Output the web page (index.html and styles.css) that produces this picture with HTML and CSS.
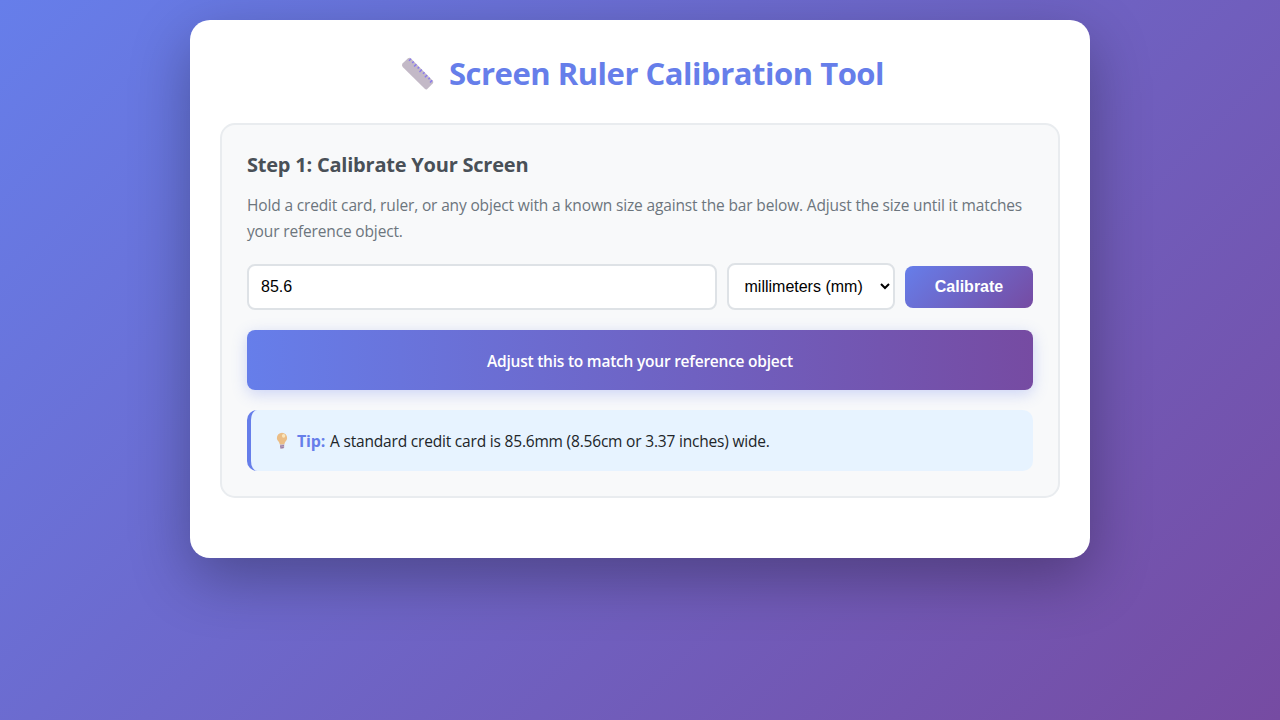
FILE: index.html
```html
<!DOCTYPE html>
<html lang="en">
<head>
  <meta charset="UTF-8">
  <meta name="viewport" content="width=device-width, initial-scale=1.0">
  <title>Screen Ruler Calibration Tool</title>
  <link rel="stylesheet" href="styles.css">
</head>
<body>

<div class="container">
  <h1>
    <svg class="ruler-icon" viewBox="0 0 34 34" aria-hidden="true">
      <path d="M1.500 6.500 L7 1.200 Q8.500 .3 10 1.600 L32 24 Q32.800 25.300 31.700 26.500 L26 32.200 Q25 32.800 24 32 L1.700 10 Q.3 8.200 1.500 6.500Z" fill="#c3b9c7"/>
      <path d="M10 1.800l-2 2M12.700 4.500l-1.500 1.500M15.400 7.200l-2.300 2.300M18.100 9.900l-1.500 1.500M20.800 12.600l-2.300 2.300M23.500 15.300l-1.500 1.500M26.200 18l-2.300 2.300M28.900 20.700l-1.500 1.500M31.200 23.200l-2.200 2.200" stroke="#8878ee" stroke-width="1.400" fill="none"/>
    </svg>
    <span>Screen Ruler Calibration Tool</span>
  </h1>

  <div class="section">
    <h2>Step 1: Calibrate Your Screen</h2>
    <p class="instructions">Hold a credit card, ruler, or any object with a known size against the bar below. Adjust the size until it matches<br>your reference object.</p>

    <div class="input-group">
      <input type="number" id="referenceSize" value="85.6" step="0.1">
      <select id="unit">
        <option value="mm">millimeters (mm)</option>
        <option value="cm">centimeters (cm)</option>
        <option value="in">inches (in)</option>
      </select>
      <button type="button">Calibrate</button>
    </div>

    <div class="calibration-bar">Adjust this to match your reference object</div>

    <div class="tip">
      <svg class="bulb-icon" viewBox="0 0 12 18" aria-hidden="true">
        <path d="M6 .8a5.100 5.100 0 0 1 5.100 5.200c0 2.700-2.300 3.400-2.700 6.500H3.800C3.400 9.400.9 8.700.9 6A5.100 5.100 0 0 1 6 .8Z" fill="#ebbd86"/>
        <ellipse cx="7.600" cy="3.800" rx="1.700" ry="1.900" fill="#fbe6bb"/>
        <path d="M4 12.500h4.200v3.200L7 16.800H5L4 15.700Z" fill="#c4afb8"/>
        <path d="M4 14.300l4-.8M4.300 16l3.600-.8" stroke="#8a6ca8" stroke-width=".8"/>
      </svg>
      <strong>Tip:</strong>
      <span>A standard credit card is 85.6mm (8.56cm or 3.37 inches) wide.</span>
    </div>
  </div>
</div>

</body>
</html>
```

FILE: styles.css
```css
* {
  margin: 0;
  padding: 0;
  box-sizing: border-box;
}
body {
  font-family: "Segoe UI", "Open Sans", sans-serif;
  background: linear-gradient(135deg, #667eea 0%, #764ba2 100%);
  min-height: 100vh;
  padding: 20px;
  color: #212529;
}
.container {
  max-width: 900px;
  height: 538px;
  margin: 0 auto;
  padding: 30px;
  background: white;
  border-radius: 20px;
  box-shadow: 0 20px 60px rgba(0, 0, 0, 0.3);
}
h1 {
  display: flex;
  align-items: center;
  justify-content: center;
  gap: 14px;
  height: 48px;
  margin-bottom: 25px;
  padding-left: 5px;
  color: #667eea;
  font-size: 31px;
  letter-spacing: -0.48px;
  white-space: nowrap;
}
h1 span {
  padding-bottom: 3px;
}
.ruler-icon {
  width: 34px;
  height: 34px;
}
.section {
  height: 375px;
  padding: 25px;
  background: #f8f9fa;
  border: 2px solid #e9ecef;
  border-radius: 15px;
}
h2 {
  margin-bottom: 12px;
  color: #495057;
  font-size: 20px;
  line-height: 30px;
  letter-spacing: -0.22px;
}
.instructions {
  margin-bottom: 19px;
  color: #6c757d;
  font-size: 15.5px;
  line-height: 26px;
  letter-spacing: -0.15px;
  white-space: nowrap;
}
.input-group {
  display: flex;
  align-items: center;
  gap: 10px;
  height: 47px;
  margin-bottom: 20px;
}
.input-group input,
.input-group select {
  padding: 12px;
  background: white;
  border: 2px solid #dee2e6;
  border-radius: 8px;
  font-family: "Liberation Sans", Arial, sans-serif;
  font-size: 16px;
}
.input-group input {
  flex: 1;
  height: 46px;
}
.input-group select {
  width: 168px;
  height: 47px;
  padding-left: 11.5px;
}
.input-group button {
  width: 128px;
  height: 42px;
  background: linear-gradient(135deg, #667eea 0%, #764ba2 100%);
  border: none;
  border-radius: 8px;
  color: white;
  font-family: "Liberation Sans", Arial, sans-serif;
  font-size: 16px;
  font-weight: 600;
  cursor: pointer;
}
.calibration-bar {
  display: flex;
  align-items: center;
  justify-content: center;
  height: 60px;
  margin-bottom: 20px;
  padding-top: 2px;
  background: linear-gradient(90deg, #667eea 0%, #764ba2 100%);
  border-radius: 8px;
  box-shadow: 0 4px 15px rgba(102, 126, 234, 0.3);
  color: white;
  font-size: 15.5px;
  font-weight: 600;
  letter-spacing: -0.23px;
}
.tip {
  display: flex;
  align-items: center;
  height: 61px;
  padding-left: 21px;
  background: #e7f3ff;
  border-left: 4px solid #667eea;
  border-radius: 10px;
  font-size: 15.5px;
  letter-spacing: -0.19px;
  white-space: nowrap;
}
.bulb-icon {
  width: 12px;
  height: 18px;
  margin: 0 9px 0 4px;
}
.tip strong {
  margin-right: 5px;
  color: #667eea;
  font-size: 16px;
}
```
